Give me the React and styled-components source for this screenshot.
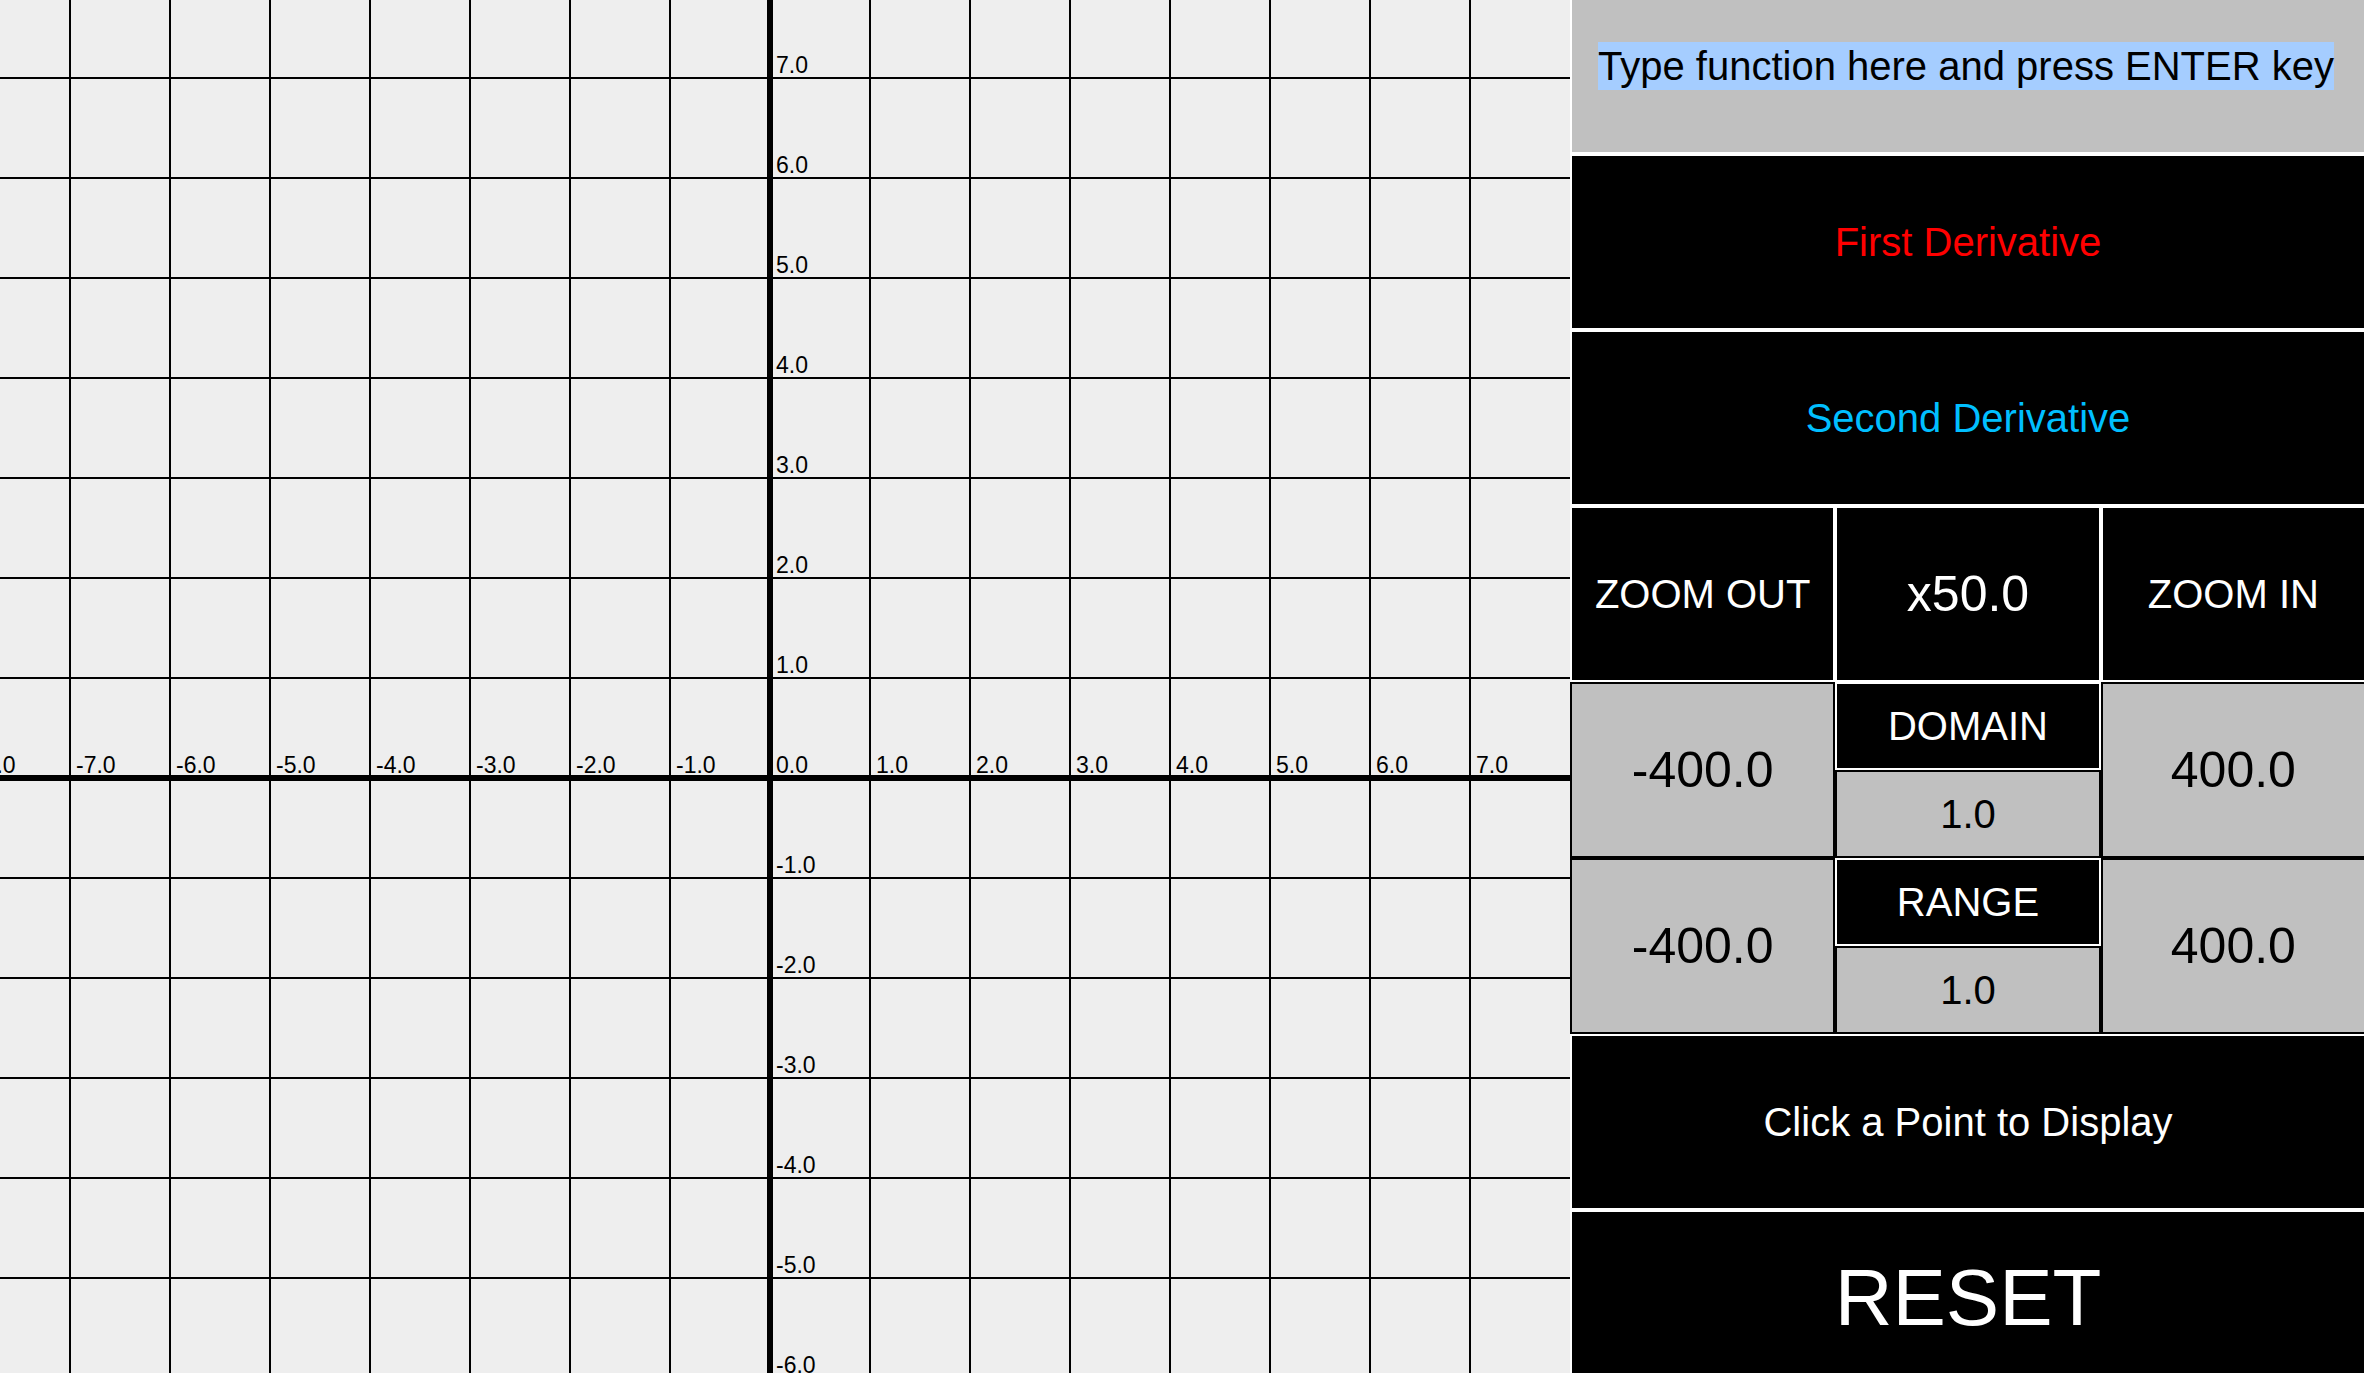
import React from "react";
import styled, { createGlobalStyle } from "styled-components";

const GlobalStyle = createGlobalStyle`
  html, body {
    margin: 0;
    padding: 0;
    overflow: hidden;
    background: #eeeeee;
  }
  body {
    font-family: "Liberation Sans", Arial, Helvetica, sans-serif;
  }
`;

const Screen = styled.div`
  display: flex;
  width: 100vw;
  height: 100vh;
  overflow: hidden;
`;

const Plot = styled.div`
  flex: 0 0 1570px;
  height: 100%;
  background: #eeeeee;
  svg {
    display: block;
  }
`;

const Panel = styled.div`
  flex: 0 0 796px;
  display: grid;
  grid-template-columns: repeat(3, 1fr);
  grid-template-rows: 154px 176px 176px 176px repeat(4, 88px) 176px 176px;
  background: #ffffff;
`;

const FunctionField = styled.div`
  grid-column: 1 / -1;
  box-sizing: border-box;
  background: #c0c0c0;
  border: 2px solid #ffffff;
  border-top: none;
  padding: 42px 0 0 26px;
  font-size: 40px;
  color: #000;
  white-space: nowrap;
`;

const Selection = styled.span`
  display: inline-block;
  line-height: 48px;
  background: #a5cdff;
`;

const WideButton = styled.div`
  grid-column: 1 / -1;
  box-sizing: border-box;
  display: flex;
  align-items: center;
  justify-content: center;
  background: #000;
  border: 2px solid #ffffff;
  color: ${(props) => props.$color || "#ffffff"};
  font-size: ${(props) => props.$size || 40}px;
`;

const DarkCell = styled.div`
  box-sizing: border-box;
  display: flex;
  align-items: center;
  justify-content: center;
  background: #000;
  border: 2px solid #ffffff;
  color: #ffffff;
  font-size: ${(props) => props.$size || 40}px;
  white-space: nowrap;
`;

const BoundValue = styled.div`
  grid-row: span 2;
  box-sizing: border-box;
  display: flex;
  align-items: center;
  justify-content: center;
  background: #c0c0c0;
  border: 2px solid #000;
  color: #000;
  font-size: 50px;
`;

const StepValue = styled.div`
  box-sizing: border-box;
  display: flex;
  align-items: center;
  justify-content: center;
  background: #c0c0c0;
  border: 2px solid #000;
  color: #000;
  font-size: 40px;
`;

const W = 1570;
const H = 1373;
const OX = 770;
const OY = 778;
const STEP = 100;

const fmt = (n) => `${n}.0`;

const Grid = () => {
  const xs = [];
  for (let k = -7; k <= 7; k++) xs.push(k);
  const ys = [];
  for (let j = -6; j <= 7; j++) ys.push(j);
  const xLabels = [];
  for (let k = -8; k <= 7; k++) xLabels.push(k);

  return (
    <svg width={W} height={H} viewBox={`0 0 ${W} ${H}`}>
      <rect x="0" y="0" width={W} height={H} fill="#eeeeee" />
      {xs
        .filter((k) => k !== 0)
        .map((k) => (
          <rect key={`v${k}`} x={OX + k * STEP - 1} y="0" width="2" height={H} fill="#000" />
        ))}
      {ys
        .filter((j) => j !== 0)
        .map((j) => (
          <rect key={`h${j}`} x="0" y={OY - j * STEP - 1} width={W} height="2" fill="#000" />
        ))}
      <rect x={OX - 3} y="0" width="6" height={H} fill="#000" />
      <rect x="0" y={OY - 3} width={W} height="6" fill="#000" />
      <g fontFamily='"Liberation Sans", Arial, sans-serif' fontSize="23" fill="#000">
        {xLabels.map((k) => (
          <text key={`xl${k}`} x={OX + k * STEP + 6} y={OY - 5}>
            {fmt(k)}
          </text>
        ))}
        {ys
          .filter((j) => j !== 0)
          .map((j) => (
            <text key={`yl${j}`} x={OX + 6} y={OY - j * STEP - 5}>
              {fmt(j)}
            </text>
          ))}
      </g>
    </svg>
  );
};

export default () => {
  return (
    <>
      <GlobalStyle />
      <Screen>
        <Plot>
          <Grid />
        </Plot>
        <Panel>
          <FunctionField>
            <Selection>Type function here and press ENTER key</Selection>
          </FunctionField>
          <WideButton $color="#ff0000">First Derivative</WideButton>
          <WideButton $color="#00bfff">Second Derivative</WideButton>
          <DarkCell>ZOOM OUT</DarkCell>
          <DarkCell $size={50}>x50.0</DarkCell>
          <DarkCell>ZOOM IN</DarkCell>
          <BoundValue>-400.0</BoundValue>
          <DarkCell>DOMAIN</DarkCell>
          <BoundValue>400.0</BoundValue>
          <StepValue>1.0</StepValue>
          <BoundValue>-400.0</BoundValue>
          <DarkCell>RANGE</DarkCell>
          <BoundValue>400.0</BoundValue>
          <StepValue>1.0</StepValue>
          <WideButton>Click a Point to Display</WideButton>
          <WideButton $size={80}>RESET</WideButton>
        </Panel>
      </Screen>
    </>
  );
};
